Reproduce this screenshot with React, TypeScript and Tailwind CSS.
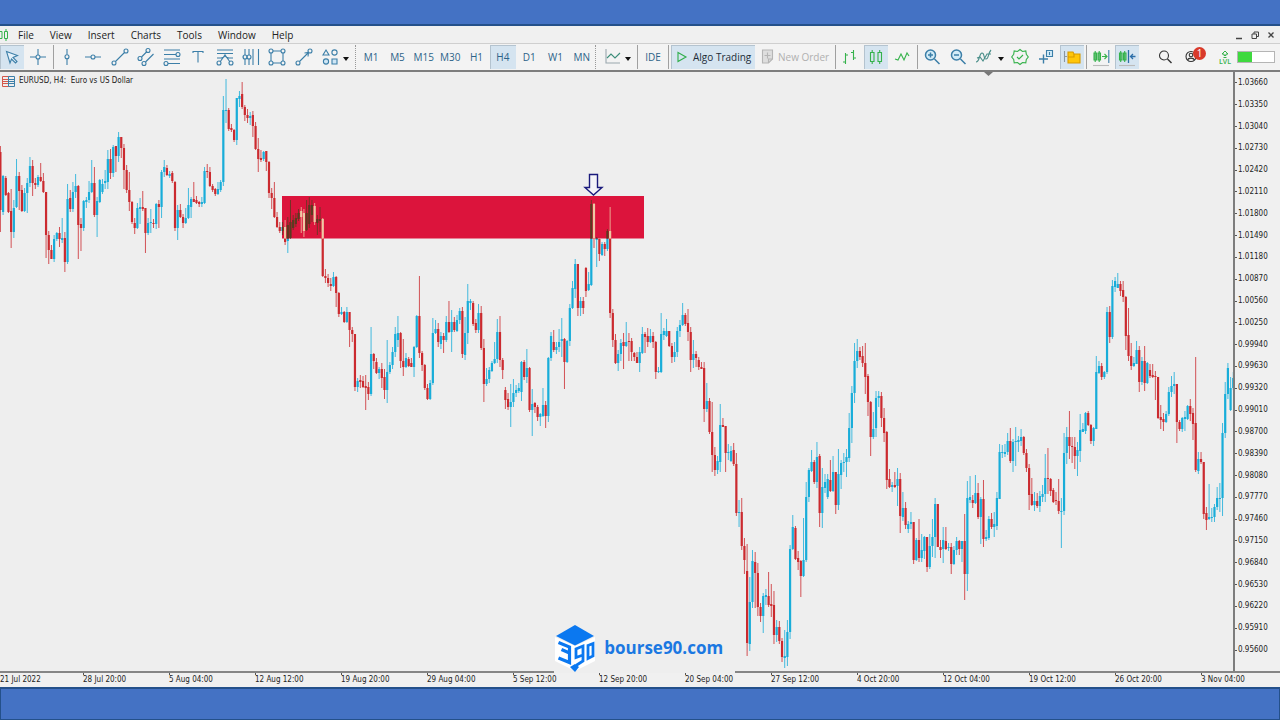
import * as React from "react";

const menus = ["File", "View", "Insert", "Charts", "Tools", "Window", "Help"];

const timeframes = ["M1", "M5", "M15", "M30", "H1", "H4", "D1", "W1", "MN"];

const prices = [
  "1.03660", "1.03350", "1.03040", "1.02730", "1.02420", "1.02110", "1.01800",
  "1.01490", "1.01180", "1.00870", "1.00560", "1.00250", "0.99940", "0.99630",
  "0.99320", "0.99010", "0.98700", "0.98390", "0.98080", "0.97770", "0.97460",
  "0.97150", "0.96840", "0.96530", "0.96220", "0.95910", "0.95600",
];

const dates = [
  "28 Jul 20:00", "5 Aug 04:00", "12 Aug 12:00", "19 Aug 20:00", "29 Aug 04:00",
  "5 Sep 12:00", "12 Sep 20:00", "20 Sep 04:00", "27 Sep 12:00", "4 Oct 20:00",
  "12 Oct 04:00", "19 Oct 12:00", "26 Oct 20:00", "3 Nov 04:00",
];

// u/d = up or down bar, then high, body top, body bottom, low
const bars = `
d146,152,210,232 u175,176,212,215 d176,178,195,196 d192,193,212,213 d189,211,232,248 u200,208,232,238
u159,176,207,208 d172,176,191,210 d185,190,211,212 u188,193,211,212 u178,183,193,213 u157,166,183,187
d160,166,183,196 d178,183,185,189 u175,177,185,187 d163,177,181,182 d173,181,192,193 d192,192,235,258
d231,235,250,264 d245,250,259,259 u235,239,259,262 u232,233,239,241 d227,233,239,247 u218,238,240,243
d232,238,262,272 u184,199,262,264 d190,198,209,212 u182,192,209,212 u174,186,192,198 d185,186,225,259
d218,224,228,251 u200,201,228,231 u197,200,202,208 u181,192,200,203 u160,183,192,193 d167,183,215,217
u197,201,215,237 u179,180,202,203 u179,184,192,194 u170,181,183,189 u150,159,182,189 d149,159,173,179
u145,147,173,177 d146,146,156,172 u132,137,156,162 d137,137,148,158 d144,148,170,189 d165,170,190,193
d172,190,202,211 d201,202,222,224 d218,223,228,234 u203,208,228,229 u198,207,209,224 d191,207,209,211
d208,208,233,253 u218,223,233,235 u209,222,223,233 d219,223,224,228 u203,204,224,229 d200,204,207,228
u170,172,207,218 u160,167,172,177 d165,168,175,176 u171,174,176,178 d171,173,181,183 d181,182,228,231
u205,210,228,240 d204,210,217,218 d214,217,223,228 u208,218,223,224 u188,205,218,219 u197,199,207,218
d182,199,202,202 d196,200,203,204 d201,202,204,207 u197,202,204,207 u167,171,203,204 d164,171,172,178
d167,172,186,187 d184,186,190,192 d188,189,194,196 u182,189,194,195 u180,182,190,192 u96,110,182,186
u79,110,111,123 d108,110,129,131 d124,128,130,132 d129,130,140,142 u98,98,140,145 u91,96,99,107
d82,94,107,109 d105,107,115,121 d109,115,118,123 u112,116,118,125 d111,115,126,137 d122,126,149,150
d138,149,159,172 d150,158,160,162 u151,152,159,161 d151,151,162,171 d161,162,193,198 d188,193,198,209
d182,198,217,218 d212,217,227,228 d222,227,231,233 u222,227,231,235 d220,227,242,245 u217,225,241,253
u200,222,238,239 u215,220,228,230 u213,218,224,227 u209,213,219,221 d207,211,217,233 d209,213,231,237
u200,213,230,231 u197,205,224,228 u200,205,215,222 d203,206,222,225 u215,219,223,235 u207,219,221,232
d218,219,276,277 d269,276,278,283 d274,278,283,287 d278,284,286,291 u272,277,286,287 d276,277,293,307
d292,293,314,317 u307,312,314,315 d311,312,322,323 u307,312,322,323 d312,312,330,347 d327,330,334,342
d334,334,387,391 u378,381,387,392 d375,380,382,388 d376,381,387,388 d375,386,388,410 d382,387,394,400
u327,354,394,396 d353,354,361,369 d358,362,373,374 u367,369,373,379 d363,369,378,388 d369,377,390,399
u340,372,390,403 u362,365,372,374 u347,352,365,369 u327,334,352,357 u316,333,340,347 d332,333,361,368
d339,361,367,376 u353,358,367,368 d357,359,366,367 d358,363,367,367 u346,347,367,377 u315,316,347,348
d276,316,353,358 d351,353,365,371 d364,365,388,390 d384,388,399,400 u380,383,399,400 u318,333,383,385
u320,329,333,334 d323,329,342,347 u332,336,344,349 d333,336,340,353 u316,322,340,342 d301,322,332,333
u310,322,332,352 d317,322,330,332 u315,320,331,332 u308,311,320,324 d307,311,354,358 u317,333,355,360
u284,301,333,344 u299,301,303,310 d301,303,324,326 d319,323,330,333 u304,313,330,333 d306,313,348,350
d339,348,384,402 u368,379,384,386 u367,370,379,383 u361,363,371,372 u342,359,363,364 u319,332,359,363
d316,332,360,367 d358,360,370,379 d387,390,400,409 d393,399,407,410 u384,402,407,427 u379,393,402,407
u385,390,393,397 u383,388,391,393 u361,362,392,401 d360,362,377,380 u349,368,377,383 d367,368,410,412
u389,404,410,436 d402,403,407,413 d405,407,417,421 u413,414,417,426 u388,405,416,417 d401,405,416,428
u357,358,416,422 u332,336,358,361 d330,342,350,352 u342,347,350,354 u329,342,347,352 u318,339,341,357
d338,339,362,389 u340,341,362,363 u304,308,341,346 u281,288,308,309 u259,264,289,298 d264,264,308,316
u297,301,308,316 d297,301,308,314 d267,268,291,297 u272,284,290,291 u200,204,285,286 d203,204,239,248
u237,238,240,267 d238,239,254,261 u242,244,255,256 d242,244,249,256 u229,231,249,251 d207,231,313,318
d309,313,340,347 d334,340,363,364 u350,354,363,371 u339,343,354,361 d333,342,346,369 u322,342,346,347
d333,341,342,361 d338,341,352,361 d352,353,357,361 d352,357,363,363 u347,352,363,372 u327,334,353,354
d332,334,337,353 d328,336,342,347 u329,336,342,343 d332,336,342,348 d341,342,372,379 u367,371,372,373
u313,334,372,373 u328,331,335,340 u319,331,336,337 d331,331,346,347 d343,346,357,363 u342,352,357,362
u327,331,352,357 u320,325,331,337 u303,315,325,326 d313,315,324,326 d309,323,332,341 d327,332,360,372
u340,354,360,368 d351,354,358,367 d357,360,367,370 d362,367,369,369 d362,368,409,422 u383,401,409,412
d398,401,432,434 d402,432,455,472 d447,455,470,476 u456,461,470,474 u404,425,462,472 d418,425,427,427
d426,426,453,472 u444,452,453,460 u446,451,461,462 d443,450,464,466 d453,464,513,516 u500,512,513,527
d498,512,546,550 d538,546,560,574 d544,571,643,656 u577,602,644,651 u550,561,602,608 d552,562,573,608
d563,573,607,616 d603,607,616,622 u593,596,616,633 u589,595,597,605 d572,596,605,607 d584,604,606,617
d591,605,635,644 u620,627,635,642 d621,627,641,644 d638,641,657,662 u630,656,658,668 u620,632,657,666
u545,549,632,639 u515,527,549,550 d526,528,559,560 d551,558,562,570 d560,561,576,597 u518,560,576,577
u482,497,560,562 u468,470,497,502 u450,462,471,472 d460,462,482,484 u442,457,482,488 d454,456,513,527
u468,487,513,528 u474,482,488,493 u474,479,497,499 d460,480,491,492 u456,472,491,492 d472,472,505,514
u449,474,505,510 u460,463,475,489 u453,462,463,472 u449,457,462,477 u413,428,458,462 u386,393,428,443
u343,361,393,403 u339,351,361,368 d347,351,357,360 d346,356,363,367 d343,363,377,394 d374,376,402,416
d401,402,437,456 u412,429,437,439 u391,398,428,437 u391,396,398,407 d392,396,418,427 d408,418,433,442
d431,432,480,489 d469,479,487,488 u482,485,487,492 d472,485,487,488 u468,479,486,506 d473,479,516,533
u492,508,517,521 d502,508,525,529 u521,524,529,533 u512,522,524,529 d522,522,560,564 u538,540,560,561
d519,540,558,562 u534,550,558,562 u536,537,551,559 d537,537,567,572 u534,546,567,569 u519,537,546,557
u498,504,537,558 d504,504,547,547 d540,547,550,558 u527,540,549,563 d527,541,549,550 u543,547,548,551
d543,547,564,574 u546,550,564,565 u537,541,550,555 d540,541,549,555 u541,541,549,562 d514,541,574,600
u481,498,574,591 u476,497,500,503 d495,500,503,508 u475,493,503,504 d483,493,517,519 u497,499,517,544
d480,499,539,547 u530,537,539,541 u516,519,538,540 d513,519,527,529 u512,524,527,537 u492,498,526,530
u444,452,499,499 u445,452,453,458 u444,452,454,457 u433,441,452,455 d428,441,461,463 u439,442,461,472
u427,441,442,466 u436,440,442,452 u429,437,441,446 d436,437,453,455 d449,453,468,472 d464,468,495,510
d478,494,505,506 u492,501,505,511 d493,501,506,508 u491,496,506,512 u485,494,497,502 u454,478,494,502
d448,478,479,494 d478,479,491,496 d488,490,502,503 d492,500,501,505 d479,501,511,514 u498,511,512,548
u433,453,511,515 u427,437,453,464 d411,437,446,459 d437,446,447,463 d437,447,456,469 u442,450,456,476
u414,430,451,462 u423,429,432,432 u412,413,431,434 d411,413,425,426 d424,425,441,444 u427,428,441,446
u356,372,429,429 u361,366,373,374 d363,366,377,380 u371,372,377,379 u307,312,372,374 d306,312,337,343
u280,286,337,339 u277,281,287,292 u273,284,288,288 d281,284,291,296 d281,290,297,302 d296,297,336,350
d308,335,356,361 d343,356,366,370 u357,363,366,367 u341,350,364,364 d346,350,382,392 u357,361,382,385
d346,361,383,391 u362,363,383,384 d364,370,376,378 d364,375,377,378 d371,376,377,400 d377,377,418,419
d405,417,420,429 d413,419,422,431 u411,414,422,423 u387,392,414,416 u376,386,392,397 u372,384,386,394
d384,384,422,443 d420,422,429,431 u417,418,429,432 u411,417,419,431 u405,406,419,420 d399,406,414,421
d408,413,424,440 d357,423,470,472 u452,459,471,474 d452,459,462,464 d462,462,514,519 d507,513,520,530
u484,517,519,520 u508,517,518,522 u504,507,517,522 u487,498,507,510 u483,498,499,512 u423,433,498,516
u382,394,433,438 u363,368,394,399 u377,388,410,411 u372,378,388,390`;

const BAR_STEP = 2.686;

const candles = bars
  .trim()
  .split(/\s+/)
  .map((bar, i) => {
    const [high, top, bottom, low] = bar.slice(1).split(",").map(Number);
    return { x: i * BAR_STEP + 0.4, up: bar[0] === "u", high, top, bottom, low };
  });

const Candles = ({ up, down }: { up: string; down: string }) => (
  <>
    {candles.map((c, i) => (
      <g key={i} fill={c.up ? up : down}>
        <rect x={c.x - 0.5} y={c.high} width={1} height={c.low - c.high} opacity={0.8} />
        <rect x={c.x - 1.1} y={c.top} width={2.2} height={Math.max(c.bottom - c.top, 1)} />
      </g>
    ))}
  </>
);

const Chart = () => (
  <svg viewBox="0 72 1233 599" className="block w-full h-auto" role="img" aria-label="EURUSD H4 candles">
    <defs>
      <clipPath id="zone">
        <rect x="282" y="196" width="362" height="42.5" />
      </clipPath>
    </defs>
    <Candles up="#18add9" down="#cb2a2f" />
    <rect x="282" y="196" width="362" height="42.5" fill="#dc143c" />
    <g clipPath="url(#zone)">
      <Candles up="#5b3a20" down="#efc9a4" />
    </g>
    <path
      d="M589.500 174.500h8v13h4.500l-8.500 7.500-8.500-7.500h4.500z"
      fill="#f4f4f8"
      stroke="#1a1a7c"
      strokeWidth="1.400"
    />
    <path d="M984 72h9l-4.500 4z" fill="#777" />
  </svg>
);

const Icon = ({
  children,
  color = "#3c7fa8",
}: {
  children: React.ReactNode;
  color?: string;
}) => (
  <svg
    viewBox="0 0 20 20"
    className="h-5 w-5 shrink-0"
    fill="none"
    stroke={color}
    strokeWidth="1.1"
    aria-hidden="true"
  >
    {children}
  </svg>
);

const ToolButton = ({
  label,
  active,
  children,
}: {
  label: string;
  active?: boolean;
  children: React.ReactNode;
}) => (
  <button
    type="button"
    aria-label={label}
    className={
      active
        ? "flex h-6 w-6 shrink-0 items-center justify-center bg-[#d5e4f0] shadow-[inset_1px_1px_0_#b4c3cf]"
        : "flex h-6 w-6 shrink-0 items-center justify-center"
    }
  >
    {children}
  </button>
);

const Caret = ({ label }: { label: string }) => (
  <button type="button" aria-label={label} className="flex h-6 w-2 shrink-0 items-center">
    <svg viewBox="0 0 8 6" className="mt-1 h-1.5 w-2" aria-hidden="true">
      <path d="M0 1h6l-3 4z" fill="#111" />
    </svg>
  </button>
);

const Separator = () => <div className="h-6 w-px shrink-0 bg-[#a0a0a0]" />;
const Grip = () => <div className="h-6 w-px shrink-0 border-l border-dotted border-[#999]" />;

const drawingTools = [
  {
    label: "Vertical line",
    icon: <><path d="M10 2v5.500M10 12v6" /><circle cx="10" cy="9.700" r="2" /></>,
  },
  {
    label: "Horizontal line",
    icon: <><path d="M2 10h6M12 10h6" /><circle cx="10" cy="10" r="2" /></>,
  },
  {
    label: "Trendline",
    icon: <><path d="M5.500 14.500l9-9" /><circle cx="4" cy="16" r="2" /><circle cx="16" cy="4" r="2" /></>,
  },
  {
    label: "Equidistant channel",
    icon: (
      <>
        <path d="M5.500 10l5.500-5.500M9.500 15l8-8" />
        <circle cx="4" cy="11.500" r="2" /><circle cx="12" cy="3.500" r="2" /><circle cx="8" cy="16.500" r="2" />
      </>
    ),
  },
  {
    label: "Fibonacci retracement",
    icon: (
      <>
        <path d="M2 3h16M2 7.500h12M2 12h16M6 16.500h12" />
        <circle cx="16" cy="7.500" r="2" /><circle cx="4" cy="16.500" r="2" />
      </>
    ),
  },
  { label: "Text", icon: <path d="M5 6V4.500h10V6M10 4.500v11" /> },
  {
    label: "Fibonacci fan",
    icon: (
      <>
        <path d="M2 3h16M2 6.500h16M5 15l5-7 5 7M2 11h4c3 0 4-3 4-3s1 3 4 3h4" />
        <circle cx="4" cy="16" r="2" /><circle cx="16" cy="16" r="2" />
      </>
    ),
  },
  {
    label: "Cycle lines",
    icon: (
      <>
        <path d="M4 2v6M4 12v6M8 2v6M8 12v6M12 2v16M17.500 2v16M2 10h1" />
        <circle cx="4" cy="10" r="2" /><circle cx="8" cy="10" r="2" />
      </>
    ),
  },
  {
    label: "Rectangle",
    icon: (
      <>
        <path d="M6 4h8M6 16h8M4 6v8M16 6v8" />
        <circle cx="4" cy="4" r="2" /><circle cx="16" cy="4" r="2" />
        <circle cx="4" cy="16" r="2" /><circle cx="16" cy="16" r="2" />
      </>
    ),
  },
  {
    label: "Arrow line",
    icon: (
      <>
        <path d="M5.500 14.500L14.500 5.500M10.500 6l4-.5-.5 4" />
        <circle cx="4" cy="16" r="2" /><circle cx="16" cy="4" r="2" />
      </>
    ),
  },
  {
    label: "Objects",
    icon: (
      <>
        <path d="M6 3l3 5H3z" /><circle cx="14.500" cy="5.500" r="2.600" />
        <circle cx="6" cy="14.500" r="2.600" fill="#cfe6f5" /><path d="M12 12h5v5h-5z" fill="#cfe6f5" />
      </>
    ),
  },
];

const Toolbar = () => (
  <div
    role="toolbar"
    aria-label="Trading tools"
    className="flex h-[26px] items-center overflow-hidden bg-[#f3f3f3] text-[10px] leading-4 text-[#2d6389]"
  >
    <ToolButton label="Cursor" active>
      <Icon><path d="M4.500 4.500l11 4-4.500 2 4 4-1.500 1.500-4-4-1.500 4z" fill="#e4f1fa" /></Icon>
    </ToolButton>
    <div className="flex w-[29px] shrink-0">
      <ToolButton label="Crosshair">
        <Icon><path d="M12 2v6M12 12v6M4 10h6M14 10h6" /><circle cx="12" cy="10" r="2" /></Icon>
      </ToolButton>
    </div>
    <Separator />
    <div className="grid w-[289px] shrink-0 grid-cols-11 justify-items-center">
      {drawingTools.map((tool) => (
        <ToolButton key={tool.label} label={tool.label}>
          <Icon>{tool.icon}</Icon>
        </ToolButton>
      ))}
    </div>
    <div className="flex w-[15px] shrink-0 gap-1">
      <Caret label="More objects" />
      <Grip />
    </div>
    <div className="grid w-[237px] shrink-0 grid-cols-9">
      {timeframes.map((tf) => (
        <button
          key={tf}
          type="button"
          className={
            tf === "H4"
              ? "h-6 bg-[#d5e4f0] text-center shadow-[inset_1px_1px_0_#b4c3cf]"
              : "h-6 text-center"
          }
        >
          {tf}
        </button>
      ))}
    </div>
    <Grip />
    <div className="flex w-[41px] shrink-0 items-center justify-end pr-1">
      <ToolButton label="Chart type">
        <Icon>
          <path d="M3 2v14h14" stroke="#9aa7ae" />
          <path d="M4 11l4-4 4 4 5-5" stroke="#3b8d79" />
        </Icon>
      </ToolButton>
      <Caret label="Chart types" />
    </div>
    <Separator />
    <button type="button" className="h-6 w-[30px] shrink-0 text-center">IDE</button>
    <Separator />
    <button
      type="button"
      className="ml-0.5 flex h-6 w-[84px] shrink-0 items-center bg-[#d5e4f0] text-[#1d2c38] shadow-[inset_1px_1px_0_#b4c3cf]"
    >
      <Icon color="#2fae4a"><path d="M7 5.500l8 4.500-8 4.500z" /></Icon>
      <span className="ml-0.5 whitespace-nowrap">Algo Trading</span>
    </button>
    <button type="button" className="flex h-6 w-20 shrink-0 items-center gap-px pl-0.5 text-[#b0b0b0]">
      <Icon color="#b5b5b5">
        <path d="M5.500 3h10v9l-4 4h-6z" fill="#dedede" />
        <path d="M11.500 16v-4h4M10.500 5.500v6M7.500 8.500h6" />
      </Icon>
      <span className="whitespace-nowrap">New Order</span>
    </button>
    <Separator />
    <div className="flex w-[81px] shrink-0 items-center gap-0.5 pl-0.5">
      <ToolButton label="Bar chart">
        <Icon color="#35b24b"><path d="M5.500 6v11M5.500 8h2.500M3 15h2.500M13.500 3v10M11 5.500h2.500M13.500 11H16" /></Icon>
      </ToolButton>
      <ToolButton label="Candlesticks" active>
        <Icon color="#35b24b">
          <path d="M4.500 5.500h3.500v9H4.500zM12 5.500h3.500v9H12zM6.200 3v2.500M6.200 14.500V17M13.700 3v2.500M13.700 14.500V17" />
        </Icon>
      </ToolButton>
      <ToolButton label="Line chart">
        <Icon color="#35b24b"><path d="M3 12l3 1 3-6 3 6 3-7 2 3" /></Icon>
      </ToolButton>
    </div>
    <Separator />
    <div className="flex w-[142px] shrink-0 items-center gap-0.5 pl-0.5">
      <ToolButton label="Zoom in">
        <Icon><circle cx="8.500" cy="8" r="5" fill="#d3ecf8" strokeWidth="1.500" /><path d="M8.500 5.500v5M6 8h5M12.500 12l5 5" strokeWidth="1.500" /></Icon>
      </ToolButton>
      <ToolButton label="Zoom out">
        <Icon><circle cx="8.500" cy="8" r="5" fill="#d3ecf8" strokeWidth="1.500" /><path d="M6 8h5M12.500 12l5 5" strokeWidth="1.500" /></Icon>
      </ToolButton>
      <ToolButton label="Indicators">
        <Icon color="#4b8f8a"><path d="M2 15c4 0 3-9 6-9s1 6 4 6 2-6 5-9M3 11l3-1 3 4 4-7h4" /></Icon>
      </ToolButton>
      <Caret label="Indicator list" />
      <ToolButton label="Options">
        <Icon color="#35b24b">
          <path d="M10 2.500l2.500 2 3.300-.5.500 3.200 2 2.800-2 2.500-.5 3.300-3.300-.3L10 17.500l-2.500-2-3.300.3-.5-3.300-2-2.500 2-2.800.5-3.200 3.300.5z" />
          <path d="M7 10l2 2 4-4" />
        </Icon>
      </ToolButton>
      <ToolButton label="Data window">
        <Icon>
          <path d="M7.500 7.500v9M3 12h9" strokeWidth="1.400" />
          <path d="M10.500 3.500h6v6h-6zM13.500 5v3" fill="#d3ecf8" />
        </Icon>
      </ToolButton>
    </div>
    <div className="flex shrink-0 items-center gap-0.5">
      <ToolButton label="Navigator" active>
        <Icon color="#d79a00">
          <path d="M6 5h5l1 2h6v9H6z" fill="#ffc60a" />
          <path d="M12 7v3H6" />
          <path d="M2.500 4v11M2.500 9.500H5" stroke="#8a97a0" />
        </Icon>
      </ToolButton>
      <Separator />
      <ToolButton label="Auto scroll">
        <Icon color="#35b24b">
          <path d="M3 6h2.500v7H3zM7 6h2.500v7H7zM4.200 4v11M8.200 4v11" />
          <path d="M11 9.500h5M13.500 7l2.500 2.500-2.500 2.500" />
          <path d="M17.800 3v13" stroke="#3c7fa8" />
          <path d="M2 18.500h16" stroke="#bbb" />
        </Icon>
      </ToolButton>
      <ToolButton label="Chart shift" active>
        <Icon color="#35b24b">
          <path d="M2.500 6H5v7H2.500zM6.500 6H9v7H6.500zM3.700 4v11M7.700 4v11" />
          <path d="M11.500 3v13M18.500 9.500h-5M16 7l-2.500 2.500L16 12" stroke="#2c6ea8" strokeWidth="1.300" />
          <path d="M2 18.500h16" stroke="#bbb" />
        </Icon>
      </ToolButton>
    </div>
    <div className="ml-auto flex shrink-0 items-center pr-[5px]">
      <ToolButton label="Search">
        <Icon color="#333"><circle cx="7" cy="8.500" r="4.500" /><path d="M10.500 12l4 4" strokeWidth="1.400" /></Icon>
      </ToolButton>
      <div className="relative ml-0.5 mr-2">
        <ToolButton label="Notifications">
          <Icon color="#333"><circle cx="8" cy="9.500" r="5" /><circle cx="8" cy="8" r="1.800" /><path d="M4.500 13c1-2.500 6-2.500 7 0" /></Icon>
        </ToolButton>
        <span className="absolute left-3 top-0.5 h-[13px] w-[13px] rounded-full bg-[#d93a2b] text-center text-[10px] leading-[13px] text-white">
          1
        </span>
      </div>
      <div className="flex h-6 w-6 flex-col items-center justify-center text-[#35b24b]">
        <svg viewBox="0 0 10 8" className="h-2 w-2.5" fill="none" stroke="#35b24b" aria-hidden="true">
          <path d="M5 1l3 3H6v1.500H4V4H2zM3.500 7.500h3" />
        </svg>
        <span className="text-[7px] leading-[7px] font-semibold">LVL</span>
      </div>
      <div
        role="meter"
        aria-label="Connection level"
        aria-valuenow={36}
        aria-valuemin={0}
        aria-valuemax={100}
        className="h-3 w-[38px] border border-[#b5b5b5] bg-white"
      >
        <div className="h-full w-[14px] bg-[#3fd93f]" />
      </div>
    </div>
  </div>
);

const Brand = () => (
  <div className="absolute -bottom-0.5 left-[43.3%] flex h-[51px] items-center gap-2 bg-[#eeeeee]">
    <svg viewBox="0 0 42 48" className="h-12 w-[42px]" aria-hidden="true">
      <path d="M1 13l20 9 20-9v24l-20 10L1 37z" fill="#fff" />
      <path d="M21 1l19 11-19 9.500L2 12z" fill="#0b78f0" />
      <path
        d="M4.500 18.500l11 4.500v6l-8-3.500 8 3.500v9.500l-11-4.500"
        fill="none"
        stroke="#0b78f0"
        strokeWidth="3.200"
      />
      <path
        d="M29 31l-7 2.500V25l7-3v15l-7 4.500M34 21.500l5-2V32l-5 2.500z"
        fill="none"
        stroke="#0b78f0"
        strokeWidth="2.800"
      />
      <path d="M16 43l5-3 4 3-4 5z" fill="#0b78f0" />
    </svg>
    <span className="pr-3 font-['Open_Sans','Noto_Sans',sans-serif] text-[17px] leading-6 font-bold text-[#1b78e2]">
      bourse90.com
    </span>
  </div>
);

const App = () => {
  return (
    <div className="min-h-screen bg-[#f0f0f0] font-['Open_Sans','Noto_Sans',sans-serif] text-[#222]">
      <div className="h-[26px] border-b-2 border-[#24508a] bg-[#4472c4]" />
      <div className="flex h-[18px] items-center border-b border-[#cfcfcf]">
        <svg viewBox="0 0 12 14" className="h-3.5 w-3" fill="none" stroke="#35b24b" aria-hidden="true">
          <path d="M-1 3.500h3v7h-3M4.500 3.500h3v7h-3zM6 1v2.500M6 10.500V13" />
        </svg>
        <nav className="ml-1.5 flex gap-4 text-[10px] leading-4">
          {menus.map((item) => (
            <button key={item} type="button">{item}</button>
          ))}
        </nav>
        <div className="ml-auto flex items-center gap-1.5 pr-1">
          <button type="button" aria-label="Minimize">
            <svg viewBox="0 0 10 10" className="h-2.5 w-2.5" stroke="#444" strokeWidth="1.500"><path d="M2 8.500h6" /></svg>
          </button>
          <button type="button" aria-label="Restore">
            <svg viewBox="0 0 10 10" className="h-2.5 w-2.5" fill="none" stroke="#444"><path d="M2 4h4.500v4.500H2zM4 4V2h4.500v4.500h-2" /></svg>
          </button>
          <button type="button" aria-label="Close">
            <svg viewBox="0 0 10 10" className="h-2.5 w-2.5" stroke="#444" strokeWidth="1.300"><path d="M2.500 2.500l5 5M7.500 2.500l-5 5" /></svg>
          </button>
        </div>
      </div>
      <Toolbar />
      <main className="border-t-2 border-[#7d7d7d] bg-[#eeeeee] font-['DejaVu_Sans_Condensed','Liberation_Sans',sans-serif] text-[8px] leading-[14px]">
        <div className="relative flex border-b-2 border-[#858585]">
          <div className="min-w-0 flex-1">
            <Chart />
          </div>
          <div className="flex w-[47px] flex-col border-l-2 border-[#7d7d7d] bg-[#f0f0f0] pb-2.5">
            {prices.map((price) => (
              <div key={price} className="flex flex-1 items-center gap-px">
                <span className="h-px w-0.5 bg-[#555]" />
                {price}
              </div>
            ))}
          </div>
          <div className="absolute left-0.5 top-0.5 flex items-center gap-1">
            <svg viewBox="0 0 13 11" className="h-[11px] w-[13px]" fill="none" aria-hidden="true">
              <path d="M.5.500h6v10h-6zM1 3.500h5M1 5.500h5M1 7.500h5" stroke="#d4574a" />
              <path d="M6.500.500h6v10h-6zM7 3.500h5M7 5.500h5M7 7.500h5" stroke="#3c7fa8" />
            </svg>
            <h1 className="whitespace-pre">EURUSD, H4:  Euro vs US Dollar</h1>
          </div>
          <Brand />
        </div>
        <div className="flex h-3.5 bg-[#f0f0f0] overflow-hidden">
          <span className="w-[83px] shrink-0">21 Jul 2022</span>
          {dates.map((date) => (
            <div key={date} className="w-[86px] shrink-0">
              <div className="h-0.5 w-px bg-[#555]" />
              <div className="-mt-0.5 whitespace-nowrap">{date}</div>
            </div>
          ))}
        </div>
      </main>
      <div className="h-[33px] border border-t-2 border-[#24508a] bg-[#4472c4]" />
    </div>
  );
};

export default App;
